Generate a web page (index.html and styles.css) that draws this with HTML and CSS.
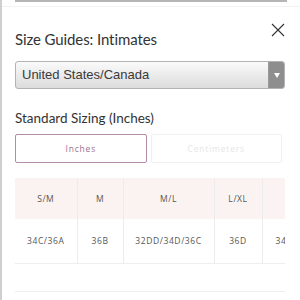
FILE: index.html
```html
<!DOCTYPE html>
<html>
<head>
<meta charset="utf-8">
<link rel="stylesheet" href="styles.css">
</head>
<body>
<div class="frame">
  <div class="topbar"></div>
  <div class="topline"></div>
  <div class="panel">
    <div class="head">
      <h1 class="title">Size Guides: Intimates</h1>
      <svg class="close" width="14" height="14" viewBox="0 0 14 14"><path d="M1 1L13 13M13 1L1 13" stroke="#333" stroke-width="1.1" fill="none"/></svg>
    </div>
    <div class="select">
      <span class="select-text">United States/Canada</span>
      <span class="select-btn"><svg width="6" height="5" viewBox="0 0 6 5"><path d="M0 0H6L3 5Z" fill="#fff"/></svg></span>
    </div>
    <h2 class="subtitle">Standard Sizing (Inches)</h2>
    <div class="tabs">
      <div class="tab active">Inches</div>
      <div class="tab">Centimeters</div>
    </div>
    <div class="table-wrap">
      <table class="sizes">
        <colgroup><col class="c1"><col class="c2"><col class="c3"><col class="c4"><col class="c5"></colgroup>
        <tr class="hrow"><th>S/M</th><th>M</th><th>M/L</th><th>L/XL</th><th></th></tr>
        <tr class="brow"><td>34C/36A</td><td>36B</td><td>32DD/34D/36C</td><td>36D</td><td class="last">34DD</td></tr>
      </table>
    </div>
    <div class="bottomline"></div>
  </div>
</div>
</body>
</html>
```
FILE: styles.css
```css
html, body { margin: 0; padding: 0; background: #fff; }
body { width: 300px; height: 300px; overflow: hidden; font-family: "Lato", "Open Sans", sans-serif; color: #333; }
.frame { height: 300px; border-left: 2px solid #cfcfcf; box-sizing: border-box; }
.topbar { height: 2px; margin: 0 13px 0 13px; background: #b5b5b5; }
.topline { height: 1px; margin-top: 4px; background: #f2f2f2; }
.panel { padding: 0 15px 0 13px; }
.head { display: flex; justify-content: space-between; align-items: flex-start; height: 54px; }
.title { margin: 22px 0 0 0; font-size: 15px; font-weight: 400; line-height: 20px; color: #333; letter-spacing: -0.1px; }
.close { margin: 16px 0 0 0; }
.select { display: flex; height: 28px; border: 1px solid #b3b3b3; border-radius: 3px; box-sizing: border-box; background: linear-gradient(#fafafa, #dcdcdc); overflow: hidden; }
.select-text { flex: 1; padding-left: 6px; line-height: 26px; font-family: "Liberation Sans", sans-serif; font-size: 13px; color: #3a3a3a; }
.select-btn { width: 15px; display: flex; align-items: center; justify-content: center; background: #8e8e8e; border-left: 1px solid #9a9a9a; }
.subtitle { margin: 20px 0 0 0; font-size: 13.5px; font-weight: 400; line-height: 18px; color: #333; }
.tabs { display: flex; gap: 4px; margin-top: 7px; width: 267px; }
.tab { flex: 1; height: 29px; box-sizing: border-box; border: 1px solid #f0f0f0; border-radius: 2px; display: flex; align-items: center; justify-content: center; font-family: "Open Sans", sans-serif; font-size: 8.5px; letter-spacing: 0.8px; color: #e6e6e6; }
.tab.active { border: 1.5px solid #b28ca8; color: #9d7190; }
.table-wrap { margin-top: 15px; width: 270px; overflow: hidden; }
.sizes { border-collapse: collapse; table-layout: fixed; width: 297px; white-space: nowrap; font-family: "Open Sans", sans-serif; font-size: 8.5px; letter-spacing: 0.6px; color: #555; }
.sizes th, .sizes td { border-right: 1px solid #ececec; text-align: center; padding: 0; font-weight: 400; }
.sizes td.last { text-align: left; padding-left: 13px; }
.hrow { background: #fbf3f1; height: 41px; }
.brow { height: 44px; border-bottom: 1px solid #eeeeee; }
.c1 { width: 62px; }
.c2 { width: 46px; }
.c3 { width: 91px; }
.c4 { width: 48px; }
.c5 { width: 50px; }
.bottomline { margin-top: 27px; height: 1px; width: 270px; background: #eeeeee; }
```
